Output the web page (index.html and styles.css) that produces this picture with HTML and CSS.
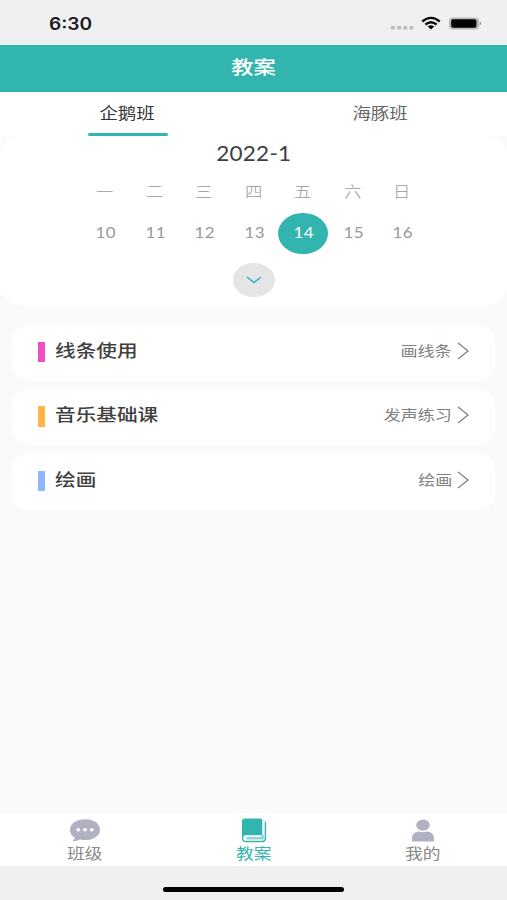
FILE: index.html
```html
<!DOCTYPE html>
<html lang="zh-CN">
<head>
<meta charset="utf-8">
<title>教案</title>
<link rel="stylesheet" href="styles.css">
</head>
<body>
<div class="app">
  <div class="status">
    <span class="time">6:30</span>
    <svg class="indicators" width="94" height="18" viewBox="0 0 94 18">
      <g fill="#bcbdbf"><ellipse cx="6" cy="12.7" rx="2.3" ry="2"/><ellipse cx="12.2" cy="12.7" rx="2.3" ry="2"/><ellipse cx="18.3" cy="12.7" rx="2.3" ry="2"/><ellipse cx="24.4" cy="12.7" rx="2.3" ry="2"/></g>
      <g fill="none" stroke="#0a0a0a" stroke-width="2.3"><path d="M35.2 6.5Q44 -.8 52.8 6.5"/><path d="M38.4 9.5Q44 5 49.6 9.5"/></g>
      <path d="M40.7 11.6Q44 9 47.3 11.6L44 14.5Z" fill="#0a0a0a"/>
      <rect x="62" y="2.6" width="30" height="11.8" rx="3.6" fill="#b7b8ba"/>
      <rect x="64.2" y="4.2" width="25.2" height="8.6" rx="2" fill="#000"/>
      <path d="M92.7 6.6Q94 7 94 8.5T92.7 10.4Z" fill="#8b8c8e"/>
    </svg>
  </div>
  <header class="header"><h1 class="wide">教案</h1></header>
  <nav class="tabs">
    <div class="tab active"><span class="wide">企鹅班</span></div>
    <div class="tab"><span class="wide">海豚班</span></div>
  </nav>
  <section class="calendar">
    <div class="month"><span>2022-1</span></div>
    <div class="week names"><span class="wide">一</span><span class="wide">二</span><span class="wide">三</span><span class="wide">四</span><span class="wide">五</span><span class="wide">六</span><span class="wide">日</span></div>
    <div class="week days">
      <div class="day"><span>10</span></div><div class="day"><span>11</span></div><div class="day"><span>12</span></div><div class="day"><span>13</span></div><div class="day selected"><span>14</span></div><div class="day"><span>15</span></div><div class="day"><span>16</span></div>
    </div>
    <div class="expand"><svg width="16" height="8" viewBox="0 0 16 8"><path d="M1 1L8 6.6L15 1" fill="none" stroke="#33b5af" stroke-width="1.6"/></svg></div>
  </section>
  <main class="lessons">
    <article class="lesson"><i class="mark pink"></i><h2>线条使用</h2><span class="detail">画线条</span><svg class="chevron" width="12" height="18" viewBox="0 0 12 18"><path d="M1 1L11 9L1 17"/></svg></article>
    <article class="lesson"><i class="mark orange"></i><h2>音乐基础课</h2><span class="detail">发声练习</span><svg class="chevron" width="12" height="18" viewBox="0 0 12 18"><path d="M1 1L11 9L1 17"/></svg></article>
    <article class="lesson last"><i class="mark blue"></i><h2>绘画</h2><span class="detail">绘画</span><svg class="chevron" width="12" height="18" viewBox="0 0 12 18"><path d="M1 1L11 9L1 17"/></svg></article>
  </main>
  <nav class="bottom">
    <div class="item">
      <svg width="32" height="26" viewBox="0 0 32 26"><path d="M16 1.3C7.5 1.3 1 5.8 1 12C1 15.3 2.8 17.9 5.8 19.800Q5.6 21.5 3.3 23.3Q8.200 23.200 11 21.6Q13.300 22.1 16 22.1C24.500 22.1 31 18 31 11.7S24.500 1.3 16 1.3Z" fill="#b0b1c1"/><g fill="#fff"><ellipse cx="9.3" cy="11.7" rx="2" ry="1.700"/><ellipse cx="16" cy="11.7" rx="2" ry="1.700"/><ellipse cx="22.7" cy="11.7" rx="2" ry="1.700"/></g></svg>
      <span class="wide">班级</span>
    </div>
    <div class="item current">
      <svg width="26" height="26" viewBox="0 0 26 26"><path d="M4 .5H19Q21.300 .5 21.300 2.500V17.300H4.500Q3 17.300 2.500 18.500Q1 19 1 17V3Q1 .5 4 .5Z" fill="#33b5af"/><path d="M1.600 16V20.500Q1.600 23.500 5 23.500H21.500Q24.400 23.500 24.400 20.500V3.500" fill="none" stroke="#33b5af" stroke-width="1.400"/><path d="M5.500 20.300H21.700V17" fill="none" stroke="#33b5af" stroke-opacity=".55" stroke-width="2.400"/></svg>
      <span class="wide">教案</span>
    </div>
    <div class="item">
      <svg width="26" height="26" viewBox="0 0 26 26"><ellipse cx="13" cy="7.100" rx="6.800" ry="5.600" fill="#b0b1c1"/><path d="M2 23.500V20.500Q2 14.200 9 13.400Q13 15 17 13.400Q24 14.200 24 20.500V23.500Z" fill="#b0b1c1"/></svg>
      <span class="wide">我的</span>
    </div>
  </nav>
  <footer class="home"><i></i></footer>
</div>
</body>
</html>
```

FILE: styles.css
```css
* { box-sizing: border-box; }
body { margin: 0; font-family: "Noto Sans CJK SC", sans-serif; background: #fafafa; }
h1, h2 { margin: 0; font-weight: 500; }
.app { width: 507px; height: 900px; display: flex; flex-direction: column; overflow: hidden; }
.wide { display: inline-block; transform: scaleX(1.2); }
.status { height: 44.5px; flex: none; background: #eff0f2; display: flex; justify-content: space-between; padding: 15px 26px 0 49px; }
.time { font: 600 16.8px/18px Inter, sans-serif; color: #1b1b1c; transform: scaleX(1.14); transform-origin: left; }
.indicators { display: block; }
.header { height: 47px; flex: none; background: #33b5af; display: flex; justify-content: center; }
.header h1 { font-size: 18.6px; line-height: 42px; color: #fff; }
.tabs { height: 44.5px; flex: none; display: flex; background: #fff; }
.tab { flex: 1; display: flex; flex-direction: column; align-items: center; font-size: 15.4px; color: #666; }
.tab span { line-height: 40px; height: 41px; }
.tab.active { color: #333; padding-left: 1px; }
.tab.active::after { content: ""; width: 80px; height: 3px; border-radius: 2px; background: #33b5af; }
.calendar { height: 169px; flex: none; background: #fff; border-radius: 22px / 18px; display: flex; flex-direction: column; align-items: center; font-family: Lato, sans-serif; }
.month { height: 35px; font-size: 20.3px; line-height: 34px; color: #404040; }
.month span { display: inline-block; transform: scaleX(1.11); letter-spacing: .2px; }
.week { width: 346.5px; display: grid; grid-template-columns: repeat(7, 1fr); text-align: center; }
.names { height: 42px; font: 300 14.5px/40px "Noto Sans CJK SC", sans-serif; color: #999; }
.names span { -webkit-font-smoothing: antialiased; }
.days { height: 41px; font-size: 15.8px; line-height: 38px; color: #999; }
.day span { display: inline-block; transform: scaleX(1.07); letter-spacing: .4px; padding-left: 2px; }
.day.selected { background: #33b5af; border-radius: 50%; color: #fff; }
.expand { width: 42px; height: 34px; margin-top: 9px; border-radius: 50%; background: #e5e5e5; display: flex; align-items: center; justify-content: center; }
.lessons { flex: 1; padding: 18.5px 12px 0; display: flex; flex-direction: column; gap: 7px; }
.lesson { height: 57.3px; padding: 0 26px 0 26px; background: #fff; border-radius: 20px / 16px; display: flex; align-items: center; }
.lesson.last { height: 59px; padding-bottom: 1px; }
.mark { width: 7px; height: 20.5px; margin-right: 10px; }
.pink { background: #ee4fc3; }
.orange { background: #ffb443; }
.blue { background: #8eb7ff; }
.lesson h2 { font-size: 17.2px; line-height: 24px; color: #404040; transform: scaleX(1.2); transform-origin: left; margin-top: -5px; }
.detail { margin-left: auto; margin-right: 5px; margin-top: -5px; font-size: 14.2px; line-height: 20px; color: #808080; transform: scaleX(1.2); transform-origin: right; }
.chevron { margin-top: -3px; fill: none; stroke: #808080; stroke-width: 1.3; }
.bottom { height: 53px; flex: none; background: #fff; display: flex; }
.item { flex: 1; display: flex; flex-direction: column; align-items: center; padding-top: 5px; font-size: 14.8px; line-height: 18px; color: #888; }
.item svg { flex: none; }
.item.current { color: #33b5af; }
.home { height: 34px; flex: none; background: #eff0f2; display: flex; justify-content: center; padding-top: 21px; }
.home i { width: 181px; height: 5px; border-radius: 3px; background: #000; }
```
